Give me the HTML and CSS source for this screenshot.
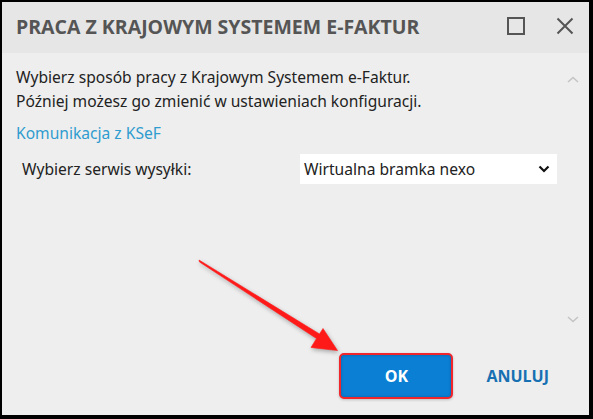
FILE: index.html
```html
<!DOCTYPE html>
<html lang="pl">
<head>
<meta charset="utf-8">
<link rel="stylesheet" href="styles.css">
</head>
<body>
<div class="window">
  <div class="titlebar">
    <div class="title">PRACA Z KRAJOWYM SYSTEMEM E-FAKTUR</div>
    <div class="controls">
      <svg class="ctl max" width="20" height="20" viewBox="0 0 20 20"><rect x="2" y="2" width="16" height="16" fill="none" stroke="#555" stroke-width="2"/></svg>
      <svg class="ctl close" width="18" height="18" viewBox="0 0 18 18"><path d="M1.5 1.5 L16.5 16.5 M16.5 1.5 L1.5 16.5" stroke="#555" stroke-width="2"/></svg>
    </div>
  </div>
  <div class="main">
    <div class="content">
      <div class="scrollpane">
        <p class="intro">Wybierz sposób pracy z Krajowym Systemem e-Faktur.<br>Później możesz go zmienić w ustawieniach konfiguracji.</p>
        <a class="link" href="#">Komunikacja z KSeF</a>
        <div class="field">
          <span class="label">Wybierz serwis wysyłki:</span>
          <div class="select">
            <span>Wirtualna bramka nexo</span>
            <svg width="12" height="8" viewBox="0 0 12 8"><path d="M1.5 1.5 L6 6 L10.5 1.5" fill="none" stroke="#111" stroke-width="2.2"/></svg>
          </div>
        </div>
      </div>
      <div class="scrollbar">
        <svg width="12" height="7" viewBox="0 0 12 7"><path d="M1 6 L6 1.5 L11 6" fill="none" stroke="#c4c4c4" stroke-width="1.6"/></svg>
        <svg width="12" height="7" viewBox="0 0 12 7"><path d="M1 1 L6 5.5 L11 1" fill="none" stroke="#c4c4c4" stroke-width="1.6"/></svg>
      </div>
    </div>
    <div class="footer">
      <button class="btn ok">OK</button>
      <button class="btn cancel">ANULUJ</button>
    </div>
  </div>
  <svg class="arrow" width="593" height="419" viewBox="0 0 593 419">
    <polygon points="199,260 319.5,334 323,328.5 337.5,350.5 311,347.5 316.5,338.5 199.5,262" fill="#ff1a1a" stroke="#ff1a1a" stroke-width="0.6" stroke-linejoin="round"/>
  </svg>
</div>
</body>
</html>
```
FILE: styles.css
```css
html, body {
  margin: 0;
  padding: 0;
  background: #000;
}
body {
  width: 593px;
  height: 419px;
  overflow: hidden;
}
.window {
  margin: 2px 4px 0 2px;
  width: 587px;
  height: 413px;
  background: #eeeeee;
  display: flex;
  flex-direction: column;
}
.titlebar {
  height: 51px;
  flex: none;
  background: #e6e6e6;
  display: flex;
  align-items: center;
  justify-content: space-between;
  padding: 0 14px 0 14px;
}
.title {
  font-family: "Open Sans", sans-serif;
  font-weight: 700;
  font-size: 19.5px;
  color: #555;
  margin-top: -2px;
}
.controls {
  display: flex;
  align-items: center;
  gap: 30px;
  margin-right: 1px;
  margin-top: -3px;
}
.main {
  flex: 1;
  display: flex;
  flex-direction: column;
}
.content {
  flex: 1;
  display: flex;
}
.scrollpane {
  flex: 1;
  padding: 12px 0 0 14px;
  font-family: "Noto Sans", sans-serif;
  font-size: 15.6px;
  color: #222;
}
.intro {
  margin: 0;
  line-height: 24px;
}
.link {
  display: block;
  margin-top: 9px;
  color: #2e9ccf;
  text-decoration: none;
  line-height: 22px;
}
.field {
  display: flex;
  align-items: center;
  margin-top: 10px;
}
.label {
  width: 278px;
  padding-left: 6px;
}
.select {
  width: 246px;
  height: 30px;
  background: #fff;
  display: flex;
  align-items: center;
  justify-content: space-between;
  padding: 0 7px 0 4px;
}
.scrollbar {
  width: 36px;
  flex: none;
  display: flex;
  flex-direction: column;
  justify-content: space-between;
  align-items: center;
  padding: 23px 4px 30px 0;
  box-sizing: border-box;
}
.footer {
  flex: none;
  display: flex;
  justify-content: flex-end;
  align-items: center;
  padding: 0 40px 16px 0;
  gap: 33px;
}
.btn {
  font-family: "Open Sans", sans-serif;
  font-weight: 700;
  font-size: 16px;
  border: none;
  padding: 0;
  cursor: pointer;
}
.ok {
  width: 114px;
  height: 46px;
  background: #0a7fd4;
  color: #fff;
  font-size: 16px;
  border: 2px solid #f0262c;
  border-radius: 5px;
  box-shadow: inset 0 0 3px rgba(0,0,0,0.25), 0 1px 3px rgba(0,0,0,0.2);
}
.cancel {
  background: none;
  color: #1670b2;
}
.arrow {
  position: absolute;
  left: 0;
  top: 0;
  pointer-events: none;
  filter: drop-shadow(1px 2px 2px rgba(0,0,0,0.3));
}
```
